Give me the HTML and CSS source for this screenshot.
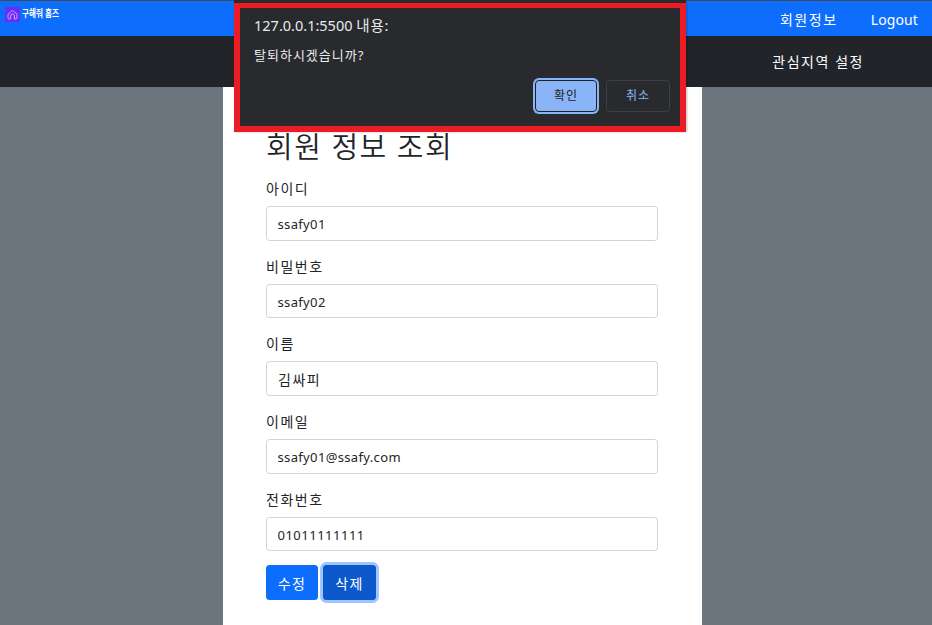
FILE: index.html
```html
<!DOCTYPE html>
<html lang="ko">
<head>
<meta charset="utf-8">
<title>회원 정보 조회</title>
<link rel="stylesheet" href="styles.css">
</head>
<body>
<header class="topbar">
  <a class="brand">
    <svg class="brand-icon" viewBox="0 0 15 15" width="15" height="15"><rect width="15" height="15" fill="#6b2cf5"/><path d="M5.4 12H4.2a1.2 1.2 0 0 1-1.2-1.2V7.2L7.5 3.4 12 7.2v3.6a1.2 1.2 0 0 1-1.2 1.2H9.4V9a1.9 1.9 0 0 0-3.8 0v3" fill="none" stroke="#d9b8ff" stroke-width=".85" stroke-linejoin="round"/></svg>
    <span class="brand-name">구해줘 홈즈</span>
  </a>
  <nav class="account"><a class="member">회원정보</a><a class="logout">Logout</a></nav>
</header>
<nav class="subnav"><a>관심지역 설정</a></nav>
<main class="sheet">
  <h1 class="title">회원 정보 조회</h1>
  <form>
    <div class="field"><label for="uid">아이디</label><input class="latin" id="uid" value="ssafy01"></div>
    <div class="field"><label for="pw">비밀번호</label><input class="latin" id="pw" value="ssafy02"></div>
    <div class="field"><label for="name">이름</label><input id="name" value="김싸피"></div>
    <div class="field"><label for="email">이메일</label><input class="latin" id="email" value="ssafy01@ssafy.com"></div>
    <div class="field"><label for="tel">전화번호</label><input class="latin digits" id="tel" value="01011111111"></div>
    <div class="actions"><button type="button" class="btn">수정</button><button type="button" class="btn btn-active">삭제</button></div>
  </form>
</main>
<section class="dialog" role="dialog">
  <div class="dialog-origin">127.0.0.1:5500 <span>내용:</span></div>
  <div class="dialog-text">탈퇴하시겠습니까?</div>
  <div class="dialog-actions"><button type="button" class="confirm">확인</button><button type="button" class="cancel">취소</button></div>
</section>
</body>
</html>
```
FILE: styles.css
```css
* { box-sizing: border-box; }
body {
  margin: 0;
  height: 625px;
  overflow: hidden;
  background: #6c757d;
  color: #212529;
  font-family: "Noto Sans", "Noto Sans CJK KR", sans-serif;
  font-size: 14px;
}
button, input { font-family: inherit; }
.topbar {
  display: flex;
  justify-content: space-between;
  height: 36px;
  padding: 0 14px 0 5px;
  border-top: 1px solid #454a50;
  background: #0d6efd;
  color: #fff;
}
.brand { display: flex; gap: 2px; padding-top: 6px; }
.brand-name {
  font: 700 9.5px/14px "Noto Sans CJK KR", sans-serif;
  transform: scale(.8, 1.1);
  transform-origin: left;
  margin-top: -1px;
}
.account { display: flex; gap: 33px; line-height: 38px; }
.member { letter-spacing: 1.6px; }
.logout { letter-spacing: .1px; }
.subnav {
  height: 51px;
  padding-right: 68px;
  background: #212529;
  color: #fff;
  line-height: 52px;
  text-align: right;
  letter-spacing: 1.55px;
}
.sheet {
  width: 479px;
  height: 538px;
  margin-left: 223px;
  padding: 38px 44px 0 43px;
  background: #fff;
}
.title {
  margin: 0 0 10px;
  font-size: 29px;
  font-weight: 350;
  line-height: 43px;
  height: 44px;
  letter-spacing: 1.5px;
}
.field { height: 77.7px; }
.field label {
  display: block;
  height: 27px;
  line-height: 20px;
  letter-spacing: 1.5px;
}
.field input {
  display: block;
  width: 100%;
  height: 34.5px;
  padding: 1px 11px 0;
  border: 1px solid #ced4da;
  border-radius: 3.5px;
  background: #fff;
  color: #212529;
  font-size: 14px;
  letter-spacing: 1.5px;
  outline: 0;
}
.field .latin { padding-top: 2px; padding-left: 10.5px; font-size: 13px; letter-spacing: .35px; }
.field .digits { letter-spacing: .5px; }
.actions { display: flex; gap: 5px; margin-top: -2px; }
.btn {
  width: 52px;
  height: 35px;
  padding: 0;
  border: 0;
  border-radius: 3.5px;
  background: #0d6efd;
  color: #fff;
  font-size: 14px;
  letter-spacing: 1.3px;
}
.btn-active {
  width: 53px;
  background: #0a58ca;
  box-shadow: 0 0 0 3px #9ec5fe;
}
.dialog {
  position: absolute;
  left: 234px;
  top: 3px;
  width: 452px;
  height: 129px;
  padding: 7px 10px 0 14px;
  border: 6px solid #ed1c24;
  border-top-width: 5px;
  background: #292a2d;
  color: #e8eaed;
  box-shadow: 0 -3px 0 #292a2d, 1px 0 2px #0004;
}
.dialog-origin { font-size: 14.5px; line-height: 20px; }
.dialog-origin span { letter-spacing: .8px; }
.dialog-text { margin-top: 11px; font-size: 13px; line-height: 18px; letter-spacing: 1px; }
.dialog-actions {
  display: flex;
  justify-content: flex-end;
  gap: 9px;
  margin-top: 16px;
}
.dialog-actions button {
  width: 64px;
  height: 32px;
  padding: 0 0 2px;
  border-radius: 4px;
  font-size: 12px;
  letter-spacing: .9px;
}
.dialog-actions .confirm {
  width: 62px;
  border: 1px solid #202124;
  background: #8ab4f8;
  color: #202124;
  box-shadow: 0 0 0 2px #8ab4f8;
}
.dialog-actions .cancel {
  border: 1px solid #3c4043;
  background: transparent;
  color: #8ab4f8;
}
```
